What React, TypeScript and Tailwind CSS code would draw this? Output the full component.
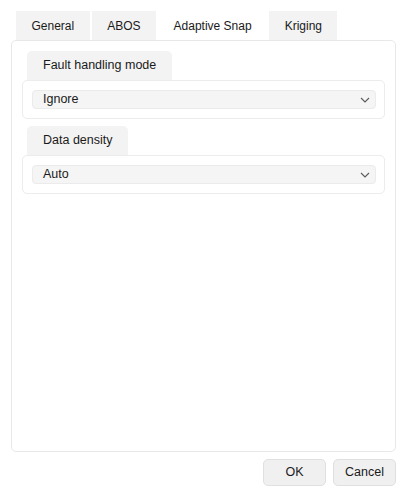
import React, { useState } from 'react';

const tabs = ['General', 'ABOS', 'Adaptive Snap', 'Kriging'];

const Chevron: React.FC = () => (
  <svg width="10" height="6" viewBox="0 0 10 6" className="shrink-0">
    <polyline points="1,1 5,5 9,1" fill="none" stroke="#5a5a5a" strokeWidth="1.1" />
  </svg>
);

const Group: React.FC<{ title: string; value: string }> = ({ title, value }) => (
  <div className="flex flex-col">
    <div className="ml-[5px] self-start h-[29px] px-4 flex items-center bg-[#f3f3f3] rounded-t-[5px]">
      {title}
    </div>
    <div className="border border-[#ececec] rounded-[5px] pt-[9px] pb-[9px] pl-[9px] pr-[8px]">
      <div className="h-[19px] flex items-center justify-between pl-[10px] pr-[5px] bg-[#f5f5f5] border border-[#ebebeb] rounded-[4px]">
        <span>{value}</span>
        <Chevron />
      </div>
    </div>
  </div>
);

const App: React.FC = () => {
  const [active, setActive] = useState(2);

  return (
    <div className="h-screen flex flex-col bg-white text-[12.5px] text-[#1a1a1a] pt-[11px] pl-[11px] pr-[12px] pb-[12px] font-['Liberation_Sans',Arial,sans-serif]">
      <div className="flex gap-[2px] pl-[5px] text-[12px]">
        {tabs.map((t, i) => (
          <button
            key={t}
            onClick={() => setActive(i)}
            className={`h-[29px] px-[15.5px] flex items-center ${i === active ? 'bg-white' : 'bg-[#f3f3f3]'}`}
          >
            {t}
          </button>
        ))}
      </div>

      <div className="flex-1 border border-[#e8e8e8] rounded-[5px] pt-[10px] px-[10px] flex flex-col gap-[7px]">
        <Group title="Fault handling mode" value="Ignore" />
        <Group title="Data density" value="Auto" />
      </div>

      <div className="flex justify-end gap-[7px] mt-[7px]">
        <button className="w-[63px] h-[27px] bg-[#f0f0f0] border border-[#e0e0e0] rounded-[5px]">OK</button>
        <button className="w-[63px] h-[27px] bg-[#f0f0f0] border border-[#e0e0e0] rounded-[5px]">Cancel</button>
      </div>
    </div>
  );
};

export default App;
